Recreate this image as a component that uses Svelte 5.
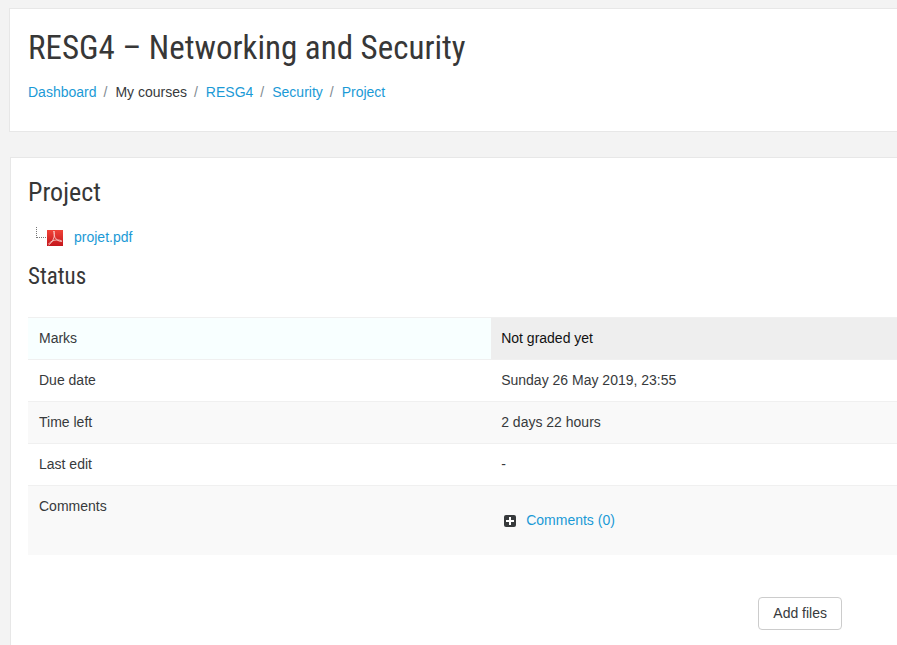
<script lang="ts">
  const courseName = "RESG4 – Networking and Security";

  const breadcrumbs = [
    { label: "Dashboard", href: "#dashboard" },
    { label: "My courses", href: null },
    { label: "RESG4", href: "#resg4" },
    { label: "Security", href: "#security" },
    { label: "Project", href: "#project" }
  ];

  const rows = [
    { label: "Marks", value: "Not graded yet", graded: true },
    { label: "Due date", value: "Sunday 26 May 2019, 23:55" },
    { label: "Time left", value: "2 days 22 hours" },
    { label: "Last edit", value: "-" }
  ];

  let commentCount = 0;
</script>

<div class="page">
  <header class="panel">
    <h1>{courseName}</h1>
    <nav aria-label="Breadcrumb">
      <ol class="breadcrumb">
        {#each breadcrumbs as crumb}
          <li>
            {#if crumb.href}
              <a href={crumb.href}>{crumb.label}</a>
            {:else}
              <span>{crumb.label}</span>
            {/if}
          </li>
        {/each}
      </ol>
    </nav>
  </header>

  <main class="panel content">
    <h2>Project</h2>

    <div class="file">
      <svg class="branch" width="11" height="12" viewBox="0 0 11 12" aria-hidden="true">
        <path d="M0.5 0V11M1 10.500H11" fill="none" stroke="#777" stroke-dasharray="1 1" />
      </svg>
      <svg class="pdf" width="16" height="16" viewBox="0 0 16 16" aria-hidden="true">
        <defs>
          <linearGradient id="pdf-red" x1="0" y1="0" x2="0" y2="1">
            <stop offset="0" stop-color="#f04338" />
            <stop offset="1" stop-color="#c4161c" />
          </linearGradient>
        </defs>
        <rect width="16" height="16" fill="url(#pdf-red)" />
        <path
          d="M6.500 1C7.500 3 7.600 5.500 6.800 8C5.800 11 3.500 14 1.500 15M1.500 14C3.500 11.500 6.500 10.200 9 10C11.500 9.800 14 10.200 15 11.200M14.800 11.500C12 11.500 9.500 10 8 7.500C7 5.500 7 3 7.300 1"
          fill="none"
          stroke="#fbd5d2"
          stroke-width="0.8"
        />
      </svg>
      <a href="#projet.pdf">projet.pdf</a>
    </div>

    <h3>Status</h3>

    <table>
      <tbody>
        {#each rows as row}
          <tr class:graded={row.graded}>
            <th scope="row">{row.label}</th>
            <td>{row.value}</td>
          </tr>
        {/each}
        <tr>
          <th scope="row">Comments</th>
          <td>
            <a class="comments" href="#comments">
              <svg width="12" height="12" viewBox="0 0 12 12" aria-hidden="true">
                <rect width="12" height="12" rx="2" fill="#373a3c" />
                <path d="M6 2V10M2 6H10" stroke="#fff" stroke-width="2" />
              </svg>
              <span>Comments ({commentCount})</span>
            </a>
          </td>
        </tr>
      </tbody>
    </table>

    <div class="actions">
      <button type="button">Add files</button>
    </div>
  </main>
</div>

<style>
  :global(body) {
    background-color: #f3f3f3;
  }

  .page {
    box-sizing: border-box;
    min-height: 100vh;
    padding: 8px 0 0 9px;
    display: flex;
    flex-direction: column;
    gap: 25px;
    font-family: "Liberation Sans", Arial, sans-serif;
    font-size: 14px;
    line-height: 21px;
    color: #373a3c;
  }

  .panel {
    padding: 17px 0 28px 18px;
    background-color: #fff;
    border: 1px solid #e7e7e7;
    border-right: none;
  }

  .content {
    flex: 1;
    margin-left: 1px;
    padding: 17px 0 14px 17px;
    border-bottom: none;
  }

  h1,
  h2,
  h3 {
    margin: 0;
    font-family: "Roboto Condensed", "Arial Narrow", "Liberation Sans", sans-serif;
    font-weight: 400;
    color: #373737;
  }

  h1 {
    font-size: 33px;
    line-height: 44px;
  }

  h2 {
    font-size: 26px;
    line-height: 34px;
  }

  h3 {
    font-size: 23px;
    line-height: 32px;
  }

  a {
    color: #1b9ad6;
    text-decoration: none;
  }

  a:hover {
    text-decoration: underline;
  }

  .breadcrumb {
    display: flex;
    flex-wrap: wrap;
    margin: 12px 0 0;
    padding: 0;
    list-style: none;
  }

  .breadcrumb li + li::before {
    content: "/";
    padding: 0 8px 0 7px;
    color: #818a91;
  }

  .file {
    display: flex;
    align-items: center;
    margin: 18px 0 13px;
    padding-left: 8px;
  }

  .branch {
    align-self: flex-start;
  }

  .pdf {
    margin-right: 11px;
  }

  table {
    width: 100%;
    margin-top: 24px;
    border-collapse: collapse;
    table-layout: fixed;
  }

  th,
  td {
    box-sizing: border-box;
    padding: 10px;
    border-top: 1px solid #f0f0f0;
    font-weight: 400;
    text-align: left;
    vertical-align: top;
  }

  th {
    width: 53.3%;
    padding-left: 11px;
  }

  tr:nth-child(odd) {
    background-color: #f9f9f9;
  }

  .graded th {
    background-color: #f8ffff;
  }

  .graded td {
    background-color: #eee;
    color: #111;
  }

  .comments {
    display: flex;
    align-items: center;
    gap: 10px;
    padding: 14px 3px;
  }

  .actions {
    display: flex;
    justify-content: flex-end;
    margin-top: 42px;
    padding-right: 55px;
  }

  button {
    padding: 5px 14px;
    background-color: #fff;
    border: 1px solid #ccc;
    border-radius: 4px;
    font: inherit;
    color: inherit;
    cursor: pointer;
  }
</style>
